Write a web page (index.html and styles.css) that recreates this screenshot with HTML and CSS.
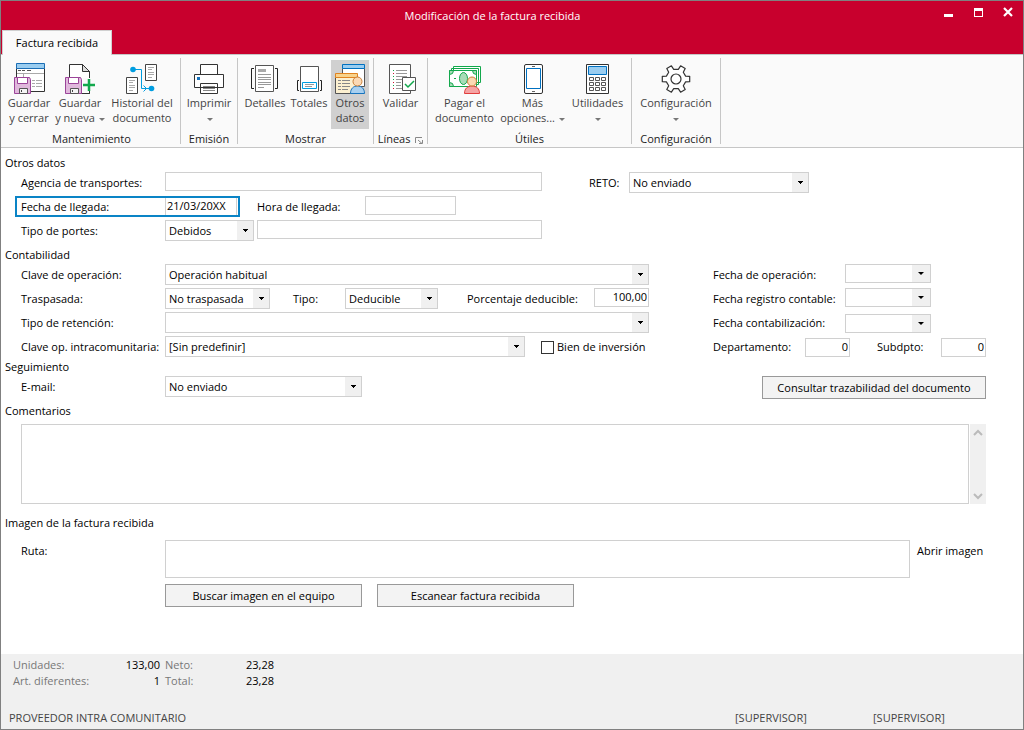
FILE: index.html
```html
<!DOCTYPE html>
<html lang="es">
<head>
<meta charset="utf-8">
<meta name="viewport" content="width=device-width, initial-scale=1">
<title>Modificación de la factura recibida</title>
<link rel="stylesheet" href="styles.css">
</head>
<body>
<div class="window">
  <header class="titlebar">
    <div class="caption">
      <h1 class="title">Modificación de la factura recibida</h1>
      <button class="winbtn" type="button" aria-label="Minimizar"><svg width="10" height="10"><path fill="#fff" d="M1 7h9v3H1z"/></svg></button>
      <button class="winbtn" type="button" aria-label="Maximizar"><svg width="10" height="10"><path fill="#fff" fill-rule="evenodd" d="M1 1h9v9H1zM2 4v5h7V4z"/></svg></button>
      <button class="winbtn" type="button" aria-label="Cerrar"><svg width="10" height="10"><path stroke="#fff" stroke-width="2.2" d="M1 1l8 8M9 1L1 9"/></svg></button>
    </div>
    <div class="tabs" role="tablist"><button class="tab" type="button" role="tab" aria-selected="true">Factura recibida</button></div>
  </header>

  <div class="ribbon">
    <section class="group g-mant">
      <div class="tools">
        <button class="tool w50" type="button">
          <svg width="34" height="32" viewBox="0 0 34 32" fill="none">
            <path fill="#fff" stroke="#333" d="M4.500 6.500h28v23h-28z"/><path fill="#9acdf0" stroke="#1b6eb5" d="M4.500 1.500h28v5h-28z"/>
            <path stroke="#555" d="M6 8.500h3M10 8.500h3M15 8.500h4"/><path stroke="#aaa" d="M5 11.500h27M11.500 11v4M20 18.500h3M24 18.500h6M20 21.500h3M24 21.500h6M20 24.500h3M24 24.500h6"/>
            <path fill="#e0b8dc" stroke="#9b4499" d="M2.500 15.500h15l1 2v14h-16z"/><path fill="#fff" stroke="#9b4499" d="M5.500 15.500h10v6h-10z"/><path fill="#f4f4f4" stroke="#555" d="M7.500 26.500h8v5h-8z"/><path stroke="#444" d="M9.500 28v2"/>
          </svg><span>Guardar<br>y cerrar</span></button>
        <button class="tool w50" type="button">
          <svg width="34" height="32" viewBox="0 0 34 32" fill="none">
            <path fill="#fff" stroke="#333" d="M6.500 2.500h13l7 7v22h-20z"/><path fill="#ddd" stroke="#333" d="M19.500 2.500v7h7z"/>
            <path fill="#fafafa" d="M20 16h12v14H20z"/><path stroke="#333" d="M19 31.500h7.500V29"/>
            <path fill="#e0b8dc" stroke="#9b4499" d="M2.500 15.500h15l1 2v14h-16z"/><path fill="#fff" stroke="#9b4499" d="M5.500 15.500h10v6h-10z"/><path fill="#f4f4f4" stroke="#555" d="M7.500 26.500h8v5h-8z"/><path stroke="#444" d="M9.500 28v2"/>
            <path stroke="#12a84c" stroke-width="2.500" d="M20 23h12M26 17v12"/>
          </svg><span>Guardar<br>y nueva <i class="drop"></i></span></button>
        <button class="tool w72" type="button">
          <svg width="34" height="32" viewBox="0 0 34 32" fill="none">
            <path fill="#fff" stroke="#444" d="M20.500 2.500h11v16h-11zM1.500 15.500h11v16h-11z"/>
            <path stroke="#aaa" d="M23 5.500h6M23 7.500h4M23 10.500h6M23 12.500h6M23 15.500h4M4 18.500h6M4 20.500h4M4 23.500h6M4 25.500h6M4 28.500h4"/>
            <circle cx="8" cy="7.500" r="2.800" fill="#009de0"/><circle cx="26.500" cy="26.500" r="2.800" fill="#009de0"/><path stroke="#009de0" d="M8 7.500h8.500v19H26M18.500 23.500l3 3-3 3"/>
          </svg><span>Historial del<br>documento</span></button>
      </div>
      <h2>Mantenimiento</h2>
    </section>
    <section class="group g-emis">
      <div class="tools">
        <button class="tool w50" type="button">
          <svg width="34" height="32" viewBox="0 0 34 32" fill="none">
            <path fill="#fff" stroke="#333" d="M8.500 2.500h17v10h-17zM2.500 12.500h29v13h-29zM8.500 21.500h17v10h-17z"/><path fill="#1673bd" d="M5 15h3v3H5z"/><path stroke="#888" d="M11 24.500h12M11 26.500h12M11 28.500h12"/>
          </svg><span>Imprimir<br><i class="drop"></i></span></button>
      </div>
      <h2>Emisión</h2>
    </section>
    <section class="group g-most">
      <div class="tools">
        <button class="tool w44" type="button">
          <svg width="34" height="32" viewBox="0 0 34 32" fill="none">
            <path fill="#fff" stroke="#555" d="M7.500 3.500h18v26h-18z"/><path stroke="#222" d="M6 6.500H3.500v20H6M27 6.500h2.500v20H27"/><path fill="#aaa" d="M10 7h8v3h-8z"/><path stroke="#999" d="M10 12.500h13M10 15.500h13M10 17.500h13M10 20.500h13M10 22.500h13M10 25.500h6"/>
          </svg><span>Detalles</span></button>
        <button class="tool w40" type="button">
          <svg width="34" height="32" viewBox="0 0 34 32" fill="none">
            <path fill="#fff" stroke="#555" d="M8.500 4.500h18v25h-18z"/><path stroke="#222" d="M7 18.500H5.500v10H7M28 18.500h1.500v10H28"/><path fill="#fff" stroke="#009de0" d="M10.500 20.500h14v6h-14z"/><path stroke="#999" d="M13 22.500h9M13 24.500h7"/>
          </svg><span>Totales</span></button>
        <button class="tool w38 active" type="button" aria-pressed="true">
          <svg width="34" height="32" viewBox="0 0 34 32" fill="none">
            <path fill="#fff" stroke="#555" d="M9.500 6.500h22v18h-22z"/><path fill="#9acdf0" stroke="#0070c0" d="M9.500 2.500h22v4h-22z"/>
            <path fill="#fcf0d0" stroke="#555" d="M2.500 15.500h23v16h-23z"/><path fill="#f8d38c" stroke="#e08320" d="M2.500 11.500h22v4h-22z"/><path stroke="#888" d="M5 18.500h3M9 18.500h8M5 21.500h3M9 21.500h8M5 24.500h3M9 24.500h8M5 27.500h3M9 27.500h6"/>
            <path fill="#a8d0f0" stroke="#1673bd" d="M17.500 31.500c0-5 3-7.500 7-7.500s7 2.500 7 7.500z"/><circle cx="24.500" cy="19.500" r="4.500" fill="#fbd9b4" stroke="#c9803a"/>
          </svg><span>Otros<br>datos</span></button>
      </div>
      <h2>Mostrar</h2>
    </section>
    <section class="group g-line">
      <div class="tools">
        <button class="tool w50" type="button">
          <svg width="34" height="32" viewBox="0 0 34 32" fill="none">
            <path fill="#fff" stroke="#555" d="M5.500 2.500h21v29h-21z"/><path stroke="#999" d="M12 8.500h11M12 11.500h11M12 14.500h11M12 17.500h6M12 20.500h5M12 23.500h5M12 26.500h9"/><path stroke="#12a84c" d="M9 8.500h1M9 14.500h1M9 17.500h1M9 23.500h1"/><path stroke="#d01030" d="M9 11.500h1M9 20.500h1M9 26.500h1"/>
            <path fill="#fff" stroke="#555" d="M18.500 15.500h13v13h-13z"/><path stroke="#12a84c" stroke-width="1.500" d="M21 22l3 3 6-6"/>
          </svg><span>Validar</span></button>
      </div>
      <h2>Líneas <svg class="launch" width="8" height="7" fill="none" stroke="#888"><path d="M.5 6V.5H7M3 3l4 3.500M7.500 3v3.500H4"/></svg></h2>
    </section>
    <section class="group g-util">
      <div class="tools">
        <button class="tool w64" type="button">
          <svg width="34" height="32" viewBox="0 0 34 32" fill="none" stroke="#12a84c">
            <path fill="#fff" d="M5.500 4.500h27v16h-27zM3.500 6.500h27v16h-27z"/><path fill="#fff" d="M1.500 8.500h27v16h-27z"/>
            <path fill="#a8dcb8" d="M1.500 8.500h4a4 4 0 0 1-4 4zM28.500 8.500h-4a4 4 0 0 0 4 4zM1.500 24.500h4a4 4 0 0 0-4-4z"/><ellipse cx="15.500" cy="16.500" rx="4" ry="6" fill="#a8dcb8"/><path d="M6 16.500h2"/>
            <path fill="#f5a3a3" stroke="#e03c3c" d="M16.500 31.500c0-5 3-7.500 7.500-7.500s7.500 2.500 7.500 7.500z"/><circle cx="24" cy="19.500" r="4.500" fill="#fbd9b4" stroke="#c9803a"/>
          </svg><span>Pagar el<br>documento</span></button>
        <button class="tool w68" type="button">
          <svg width="34" height="32" viewBox="0 0 34 32" fill="none">
            <rect x="8.500" y="2.500" width="18" height="29" rx="1.500" fill="#fff" stroke="#333"/><path stroke="#0070c0" d="M10.500 6.500h14v20h-14z"/><path stroke="#666" d="M16 4.500h3M16 29.500h3"/>
          </svg><span>Más<br>opciones... <i class="drop"></i></span></button>
        <button class="tool w58" type="button">
          <svg width="34" height="32" viewBox="0 0 34 32" fill="none">
            <path fill="#fff" stroke="#333" d="M5.500 2.500h22v29h-22z"/><path fill="#9acdf0" stroke="#0070c0" d="M7.500 4.500h18v8h-18z"/><path stroke="#555" d="M8.500 15.500h4v3h-4zM14.500 15.500h4v3h-4zM20.500 15.500h4v3h-4zM8.500 20.500h4v3h-4zM14.500 20.500h4v3h-4zM20.500 20.500h4v3h-4zM8.500 25.500h4v3h-4zM14.500 25.500h4v3h-4zM20.500 25.500h4v3h-4z"/>
          </svg><span>Utilidades<br><i class="drop"></i></span></button>
      </div>
      <h2>Útiles</h2>
    </section>
    <section class="group g-conf">
      <div class="tools">
        <button class="tool w72" type="button">
          <svg width="34" height="32" viewBox="0 0 34 32" fill="none" stroke="#333" stroke-width="1.200" stroke-linejoin="round">
            <path fill="#fff" d="M26.600 14.100l4.100.2v5.400l-4.100.2-2.300 3.900 1.900 3.800-4.600 2.600-2.300-3.500h-4.600l-2.300 3.500-4.600-2.600 1.900-3.800-2.300-3.900-4.100-.2v-5.400l4.100-.2 2.300-3.900-1.900-3.800 4.600-2.600 2.300 3.500h4.600l2.300-3.500 4.600 2.600-1.900 3.800z"/><circle cx="17" cy="17" r="5"/>
          </svg><span>Configuración<br><i class="drop"></i></span></button>
      </div>
      <h2>Configuración</h2>
    </section>
  </div>

  <form class="form">
    <h3>Otros datos</h3>
    <div class="columns otros">
      <div class="main">
        <div class="row"><label class="key" for="agencia">Agencia de transportes:</label><input class="text grow" id="agencia" type="text"></div>
        <div class="row">
          <div class="marked"><label class="key" for="llegada">Fecha de llegada:</label><input class="text" id="llegada" type="text" value="21/03/20XX"></div>
          <label class="hora" for="hora">Hora de llegada:</label><input class="text w91" id="hora" type="text">
        </div>
        <div class="row"><label class="key" for="portes">Tipo de portes:</label><select class="w89" id="portes"><option>Debidos</option></select><input class="text grow gap3" type="text" aria-label="Detalle de portes"></div>
      </div>
      <div class="side">
        <div class="row"><label class="reto" for="reto">RETO:</label><select class="w180" id="reto"><option>No enviado</option></select></div>
      </div>
    </div>

    <h3>Contabilidad</h3>
    <div class="columns conta">
      <div class="main">
        <div class="row"><label class="key" for="clave">Clave de operación:</label><select class="grow" id="clave"><option>Operación habitual</option></select></div>
        <div class="row">
          <label class="key" for="traspasada">Traspasada:</label><select class="w105" id="traspasada"><option>No traspasada</option></select>
          <label class="tipo" for="tipo">Tipo:</label><select class="w93" id="tipo"><option>Deducible</option></select>
          <label class="porc" for="porcentaje">Porcentaje deducible:</label><input class="text num push w55" id="porcentaje" type="text" value="100,00">
        </div>
        <div class="row"><label class="key" for="retencion">Tipo de retención:</label><select class="grow" id="retencion"><option></option></select></div>
        <div class="row"><label class="key" for="intra">Clave op. intracomunitaria:</label><select class="grow" id="intra"><option>[Sin predefinir]</option></select><label class="check"><input type="checkbox"> Bien de inversión</label></div>
      </div>
      <div class="side">
        <div class="row"><label class="datekey" for="foper">Fecha de operación:</label><span class="date"><input id="foper" type="text"><button type="button" aria-label="Elegir fecha de operación"></button></span></div>
        <div class="row"><label class="datekey" for="freg">Fecha registro contable:</label><span class="date"><input id="freg" type="text"><button type="button" aria-label="Elegir fecha de registro"></button></span></div>
        <div class="row low"><label class="datekey" for="fcon">Fecha contabilización:</label><span class="date"><input id="fcon" type="text"><button type="button" aria-label="Elegir fecha de contabilización"></button></span></div>
        <div class="row low"><label class="depto" for="depto">Departamento:</label><input class="text num w45" id="depto" type="text" value="0"><label class="sub" for="sub">Subdpto:</label><input class="text num w45" id="sub" type="text" value="0"></div>
      </div>
    </div>

    <h3 class="tight">Seguimiento</h3>
    <div class="row"><label class="key" for="email">E-mail:</label><select class="w197" id="email"><option>No enviado</option></select><button class="btn w224 push" type="button">Consultar trazabilidad del documento</button></div>

    <h3><label for="comentarios">Comentarios</label></h3>
    <div class="comments">
      <textarea id="comentarios"></textarea>
      <div class="scroll" aria-hidden="true">
        <svg width="10" height="8" fill="none" stroke="#bbb" stroke-width="2"><path d="M1 6l4-4 4 4"/></svg>
        <svg width="10" height="8" fill="none" stroke="#bbb" stroke-width="2"><path d="M1 2l4 4 4-4"/></svg>
      </div>
    </div>

    <h3 class="imagen">Imagen de la factura recibida</h3>
    <div class="ruta"><label class="key" for="ruta">Ruta:</label><input class="text grow tall" id="ruta" type="text"><a class="open" href="#">Abrir imagen</a></div>
    <div class="actions"><button class="btn w197" type="button">Buscar imagen en el equipo</button><button class="btn w197" type="button">Escanear factura recibida</button></div>
  </form>

  <footer class="footer">
    <dl class="totals">
      <dt>Unidades:</dt><dd>133,00</dd><dt>Neto:</dt><dd>23,28</dd>
      <dt>Art. diferentes:</dt><dd>1</dd><dt>Total:</dt><dd>23,28</dd>
    </dl>
    <div class="status"><span class="who">PROVEEDOR INTRA COMUNITARIO</span><span class="user">[SUPERVISOR]</span><span class="user">[SUPERVISOR]</span></div>
  </footer>
</div>
</body>
</html>
```
FILE: styles.css
```css
* { box-sizing: border-box; }
body { margin: 0; }
body, button, input, select, textarea {
  font-family: "Open Sans", "Noto Sans", sans-serif;
  font-size: 11px;
  line-height: 16px;
  color: #000;
}
h1, h2, h3, dl, dd { margin: 0; font-size: 11px; font-weight: 400; }
button { padding: 0; border: 0; background: none; }

.window { min-height: 100vh; display: flex; flex-direction: column; border: 1px solid #808080; background: #fff; }

/* Title bar */
.titlebar { background: #c8002d; border-bottom: 1px solid #c6c6c6; }
.caption { display: flex; align-items: flex-start; height: 29px; }
.title { flex: 1; padding: 7px 0 0 51px; text-align: center; color: #fff; }
.winbtn { width: 30px; height: 22px; display: flex; align-items: center; justify-content: center; }
.tabs { display: flex; padding-left: 1px; margin-bottom: -1px; }
.tab { height: 25px; width: 110px; background: #fafafa; border: 1px solid #d0d0d0; border-bottom: 0; }

/* Ribbon */
.ribbon { display: flex; align-items: stretch; padding: 3px 0; background: #fafafa; border-bottom: 1px solid #c6c6c6; }
.group { display: flex; flex-direction: column; justify-content: space-between; border-right: 1px solid #c6c6c6; height: 86px; }
.group h2 { text-align: center; color: #222; white-space: nowrap; line-height: 10px; }
.launch { margin-left: 2px; vertical-align: -1px; }
.g-mant { width: 180px; }
.g-mant h2 { padding-left: 2px; }
.g-emis { width: 57px; }
.g-most { width: 136px; }
.g-line { width: 54px; }
.g-util { width: 204px; }
.g-conf { width: 89px; }
.tools { display: flex; justify-content: center; gap: 2px; padding-top: 2px; }
.g-mant .tools { gap: 1px; padding-left: 1px; }
.g-most .tools { padding-left: 1px; }
.tool { display: flex; flex-direction: column; align-items: center; gap: 1px; height: 69px; padding-top: 2px; line-height: 15px; color: #444; white-space: nowrap; flex: none; }
.tool svg { flex: none; }
.tool.active { background: #d0d0d0; }
.drop { display: inline-block; vertical-align: middle; margin-left: 1px; border: 3px solid transparent; border-top-color: #777; border-bottom: 0; }
.w38 { width: 38px; }
.w40 { width: 40px; }
.w44 { width: 44px; }
.w50 { width: 50px; }
.w58 { width: 58px; }
.w64 { width: 64px; }
.w68 { width: 68px; }
.w72 { width: 72px; }

/* Form */
.form { flex: 1; padding: 7px 37px 40px 20px; }
.form h3 { margin: 4px 0 0 -16px; line-height: 16px; }
.form h3:first-child, .form h3.tight { margin-top: 0; }
.columns { display: flex; }
.main { flex: 1; min-width: 0; }
.otros { gap: 47px; }
.otros .side { width: 397px; }
.conta { gap: 64px; }
.conta .side { width: 273px; }
.row { display: flex; align-items: flex-start; height: 24px; padding: 1px 0 2px; }
.row.low { align-items: flex-end; }
.row label { align-self: flex-start; line-height: 22px; white-space: nowrap; flex: none; }
.key { width: 144px; }
.reto { width: 40px; }
.hora { width: 125px; padding-left: 17px; }
.tipo { width: 75px; padding-left: 23px; }
.porc { width: 156px; padding-left: 29px; }
.datekey { width: 132px; }
.depto { width: 92px; }
.sub { width: 91px; padding-left: 27px; }
.grow { flex: 1; min-width: 0; }
.push { margin-left: auto; }
.gap3 { margin-left: 3px; }
.w45 { width: 45px; }
.w55 { width: 55px; }
.w89 { width: 89px; }
.w91 { width: 91px; }
.w93 { width: 93px; }
.w105 { width: 105px; }
.w180 { width: 180px; }
.w197 { width: 197px; }
.w224 { width: 224px; }

.text { height: 19px; padding: 0 2px; border: 1px solid #d0d0d0; background: #fff; outline: 0; border-radius: 0; }
.num { padding: 0 1px 2px; text-align: right; }

.marked { display: flex; width: 225px; height: 21px; margin-left: -6px; padding: 0 1px 0 4px; border: 2px solid #0a84c6; }
.marked label { line-height: 18px; }
.marked .text { width: 72px; height: 17px; padding: 0 1px 2px; border-width: 0 1px; }

select {
  appearance: none; height: 21px; padding: 0 18px 0 3px; border: 1px solid #d0d0d0; border-radius: 0; outline: 0;
  background:
    linear-gradient(#000, #000) right 5px top 8px / 5px 1px no-repeat,
    linear-gradient(#000, #000) right 6px top 9px / 3px 1px no-repeat,
    linear-gradient(#000, #000) right 7px top 10px / 1px 1px no-repeat,
    linear-gradient(#f0f0f0, #f0f0f0) right top / 16px 100% no-repeat,
    #fff;
}

.date { display: flex; width: 86px; height: 19px; border: 1px solid #d0d0d0; }
.date input { flex: 1; min-width: 0; padding: 0 2px; border: 0; outline: 0; }
.date button { width: 18px; background: #f0f0f0; display: flex; align-items: center; justify-content: center; }
.date button::after { content: ""; border: 3px solid transparent; border-top-color: #000; border-bottom: 0; }

.check { display: flex; align-items: center; gap: 3px; width: 124px; padding-left: 16px; }
.check input { appearance: none; width: 13px; height: 13px; margin: 0; border: 1px solid #333; background: #fff; }
.check input:checked { background: #333; }

.btn { height: 23px; border: 1px solid #999; background: #f3f3f3; flex: none; }

.comments { display: flex; gap: 1px; margin-top: 5px; }
textarea { flex: 1; height: 80px; border: 1px solid #d0d0d0; border-radius: 0; resize: none; outline: 0; }
.scroll { width: 16px; display: flex; flex-direction: column; justify-content: space-between; align-items: center; padding: 5px 0 4px; background: #f0f0f0; }

.form h3.imagen { margin-top: 11px; }
.ruta { display: flex; margin-top: 9px; line-height: 22px; }
.tall { height: 38px; }
.open { width: 76px; padding-left: 7px; line-height: 22px; color: #000; text-decoration: none; white-space: nowrap; }
.actions { display: flex; gap: 15px; margin: 6px 0 0 144px; }

/* Footer */
.footer { background: #f0f0f0; padding: 3px 0; }
.totals { display: grid; grid-template-columns: 84px 63px 60px 54px; padding-left: 12px; }
.totals dt { color: #777; white-space: nowrap; }
.totals dt:nth-of-type(even) { padding-left: 5px; }
.totals dd { text-align: right; }
.status { display: flex; margin-top: 21px; padding: 0 12px 0 8px; color: #444; }
.who { flex: 1; }
.user { width: 138px; }
```
